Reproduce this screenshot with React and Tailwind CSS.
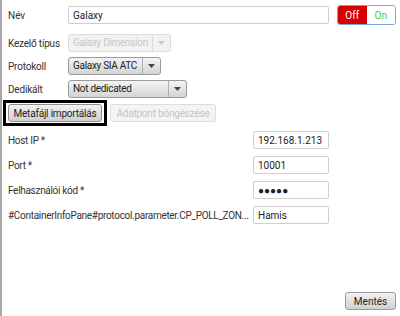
import React from "react";

const font = { fontFamily: 'Roboto, "Noto Sans", sans-serif' };

function Arrow({ disabled }) {
  return (
    <svg width="7" height="4" viewBox="0 0 7 4">
      <path d="M0 0 L7 0 L3.5 4 Z" fill={disabled ? "#c8c8c8" : "#444"} />
    </svg>
  );
}

function Select({ label, width, disabled }) {
  return (
    <div
      className={`flex h-[18px] items-stretch rounded-[3px] border ${
        disabled
          ? "border-[#dcdcdc] bg-[#f2f2f2] text-[#c8c8c8]"
          : "border-[#9a9a9a] bg-gradient-to-b from-[#f4f4f4] to-[#d4d4d4] text-[#222]"
      }`}
      style={{ width }}
    >
      <div className="flex flex-1 items-center whitespace-nowrap pl-[4px] text-[10px] leading-none tracking-[-0.3px]">
        {label}
      </div>
      <div
        className={`flex w-[18px] items-center justify-center border-l ${
          disabled ? "border-[#dcdcdc]" : "border-[#b0b0b0]"
        }`}
      >
        <Arrow disabled={disabled} />
      </div>
    </div>
  );
}

function Row({ label, children, className = "" }) {
  return (
    <div className={`flex items-center ${className}`}>
      <div className="w-[60px] whitespace-nowrap text-[10px] tracking-[-0.2px] text-[#333]">{label}</div>
      {children}
    </div>
  );
}

function TextField({ value, className = "" }) {
  return (
    <div
      className={`flex h-[18px] items-center whitespace-nowrap rounded-[2px] border border-[#cfcfcf] bg-white pl-[4px] text-[10px] text-[#222] ${className}`}
    >
      {value}
    </div>
  );
}

function RightRow({ label, value }) {
  return (
    <div className="flex h-[18px] items-center">
      <div className="w-[245px] overflow-hidden whitespace-nowrap text-[10px] tracking-[-0.3px] text-[#333]">
        {label}
      </div>
      <TextField value={value} className="w-[76px]" />
    </div>
  );
}

export default function App() {
  return (
    <div
      className="flex h-[316px] w-[400px] flex-col overflow-hidden border-l-2 border-[#a8a8a8] bg-white pb-[6px] pl-[6px] pr-[4px] pt-[5px]"
      style={font}
    >
      <div className="flex items-center">
        <div className="w-[60px] text-[10px] text-[#333]">Név</div>
        <TextField value="Galaxy" className="w-[261px]" />
        <div className="ml-[8px] flex h-[20px] w-[59px] overflow-hidden rounded-[3px] border border-[#7aa6dc] text-[10px]">
          <div className="flex flex-1 items-center justify-center bg-[#d60000] text-white">Off</div>
          <div className="flex flex-1 items-center justify-center bg-white text-[#44cc44]">On</div>
        </div>
      </div>
      <Row label="Kezelő típus" className="mt-[9px]">
        <Select label="Galaxy Dimension" width={103} disabled />
      </Row>
      <Row label="Protokoll" className="mt-[5px]">
        <Select label="Galaxy SIA ATC" width={93} />
      </Row>
      <Row label="Dedikált" className="mt-[5px]">
        <Select label="Not dedicated" width={119} />
      </Row>
      <div className="mt-[2px] flex items-center">
        <div className="-ml-[5px] border-[3px] border-black px-[2px] py-[1px]">
          <div className="flex h-[18px] w-[94px] items-center justify-center whitespace-nowrap rounded-[3px] border border-[#8f8f8f] bg-gradient-to-b from-[#f2f2f2] to-[#cfcfcf] text-[10px] tracking-[-0.2px] text-[#222]">
            Metafájl importálás
          </div>
        </div>
        <div className="ml-[3px] flex h-[18px] w-[106px] items-center justify-center whitespace-nowrap rounded-[3px] border border-[#dedede] bg-[#f4f4f4] text-[10px] tracking-[-0.2px] text-[#c4c4c4]">
          Adatpont böngészése
        </div>
      </div>
      <div className="mt-[5px] flex flex-col gap-[7px]">
        <RightRow label="Host IP *" value="192.168.1.213" />
        <RightRow label="Port *" value="10001" />
        <RightRow label="Felhasználói kód *" value="●●●●●" />
        <RightRow
          label="#ContainerInfoPane#protocol.parameter.CP_POLL_ZON..."
          value="Hamis"
        />
      </div>
      <div className="mt-auto flex justify-end">
        <div className="flex h-[18px] w-[51px] items-center justify-center rounded-[3px] border border-[#9a9a9a] bg-gradient-to-b from-[#f2f2f2] to-[#d0d0d0] text-[10px] text-[#222]">
          Mentés
        </div>
      </div>
    </div>
  );
}
